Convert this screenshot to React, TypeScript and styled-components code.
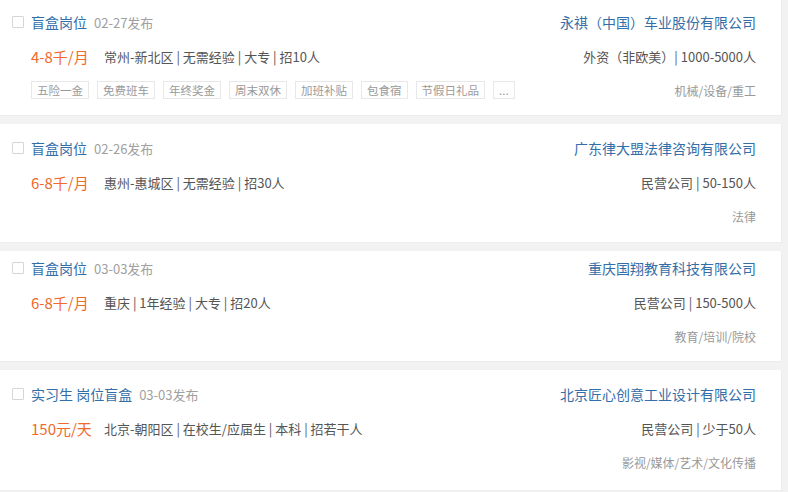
import styled, { createGlobalStyle } from "styled-components";

const GlobalStyle = createGlobalStyle`
  html, body {
    margin: 0;
    padding: 0;
    background: #f2f2f2;
  }
  body {
    font-family: "Noto Sans CJK SC", "Noto Sans", "Liberation Sans", sans-serif;
  }
`;

interface IJob {
    id: number;
    title: string;
    date: string;
    salary: string;
    info: string;
    tags?: string[];
    company: string;
    scale: string;
    industry: string;
    padTop: number;
    padBottom: number;
}

const jobs: IJob[] = [
    {
        id: 1,
        title: "盲盒岗位",
        date: "02-27发布",
        salary: "4-8千/月",
        info: "常州-新北区 | 无需经验 | 大专 | 招10人",
        tags: ["五险一金", "免费班车", "年终奖金", "周末双休", "加班补贴", "包食宿", "节假日礼品", "..."],
        company: "永祺（中国）车业股份有限公司",
        scale: "外资（非欧美）| 1000-5000人",
        industry: "机械/设备/重工",
        padTop: 10,
        padBottom: 13,
    },
    {
        id: 2,
        title: "盲盒岗位",
        date: "02-26发布",
        salary: "6-8千/月",
        info: "惠州-惠城区 | 无需经验 | 招30人",
        company: "广东律大盟法律咨询有限公司",
        scale: "民营公司 | 50-150人",
        industry: "法律",
        padTop: 12,
        padBottom: 14,
    },
    {
        id: 3,
        title: "盲盒岗位",
        date: "03-03发布",
        salary: "6-8千/月",
        info: "重庆 | 1年经验 | 大专 | 招20人",
        company: "重庆国翔教育科技有限公司",
        scale: "民营公司 | 150-500人",
        industry: "教育/培训/院校",
        padTop: 5,
        padBottom: 13,
    },
    {
        id: 4,
        title: "实习生 岗位盲盒",
        date: "03-03发布",
        salary: "150元/天",
        info: "北京-朝阳区 | 在校生/应届生 | 本科 | 招若干人",
        company: "北京匠心创意工业设计有限公司",
        scale: "民营公司 | 少于50人",
        industry: "影视/媒体/艺术/文化传播",
        padTop: 12,
        padBottom: 16,
    },
];

const List = styled.div`
    display: flex;
    flex-direction: column;
    gap: 8px;
    padding: 0 6px 5px 0;
    background: #f2f2f2;
`;

const Card = styled.div<{ $top: number; $bottom: number }>`
    display: flex;
    justify-content: space-between;
    background: #fff;
    border: 1px solid #ededed;
    border-left: none;
    border-top: none;
    padding: ${p => p.$top}px 25px ${p => p.$bottom}px 12px;
`;

const Left = styled.div`
    display: flex;
    flex-direction: column;
    gap: 10px;
`;

const Right = styled.div`
    display: flex;
    flex-direction: column;
    align-items: flex-end;
    gap: 10px;
`;

const Row = styled.div`
    display: flex;
    align-items: center;
    height: 24px;
    white-space: nowrap;
`;

const Check = styled.span`
    width: 12px;
    height: 12px;
    border: 1px solid #d6d6d6;
    border-radius: 1px;
    margin-right: 7px;
    box-sizing: border-box;
`;

const Title = styled.span`
    font-size: 14px;
    color: #336ea8;
`;

const Date = styled.span`
    font-size: 13px;
    color: #a0a0a0;
    margin-left: 7px;
`;

const Salary = styled.span`
    font-size: 15px;
    color: #f06a2c;
    margin-left: 19px;
    min-width: 73px;
`;

const Info = styled.span`
    font-size: 13px;
    color: #555;
`;

const Tags = styled.div`
    display: flex;
    gap: 8px;
    margin-left: 19px;
`;

const Tag = styled.span`
    height: 18px;
    line-height: 16px;
    box-sizing: border-box;
    border: 1px solid #e8e8e8;
    padding: 0 5px;
    font-size: 11.5px;
    color: #9a9a9a;
`;

const Company = styled.span`
    font-size: 14px;
    color: #336ea8;
`;

const Scale = styled.span`
    font-size: 13px;
    color: #555;
`;

const Industry = styled.span`
    font-size: 12px;
    color: #999;
`;

export default function App() {
    return (
        <>
            <GlobalStyle />
            <List>
                {jobs.map(job => (
                    <Card key={job.id} $top={job.padTop} $bottom={job.padBottom}>
                        <Left>
                            <Row>
                                <Check />
                                <Title>{job.title}</Title>
                                <Date>{job.date}</Date>
                            </Row>
                            <Row>
                                <Salary>{job.salary}</Salary>
                                <Info>{job.info}</Info>
                            </Row>
                            <Row>
                                {job.tags && (
                                    <Tags>
                                        {job.tags.map(t => <Tag key={t}>{t}</Tag>)}
                                    </Tags>
                                )}
                            </Row>
                        </Left>
                        <Right>
                            <Row><Company>{job.company}</Company></Row>
                            <Row><Scale>{job.scale}</Scale></Row>
                            <Row><Industry>{job.industry}</Industry></Row>
                        </Right>
                    </Card>
                ))}
            </List>
        </>
    );
}
